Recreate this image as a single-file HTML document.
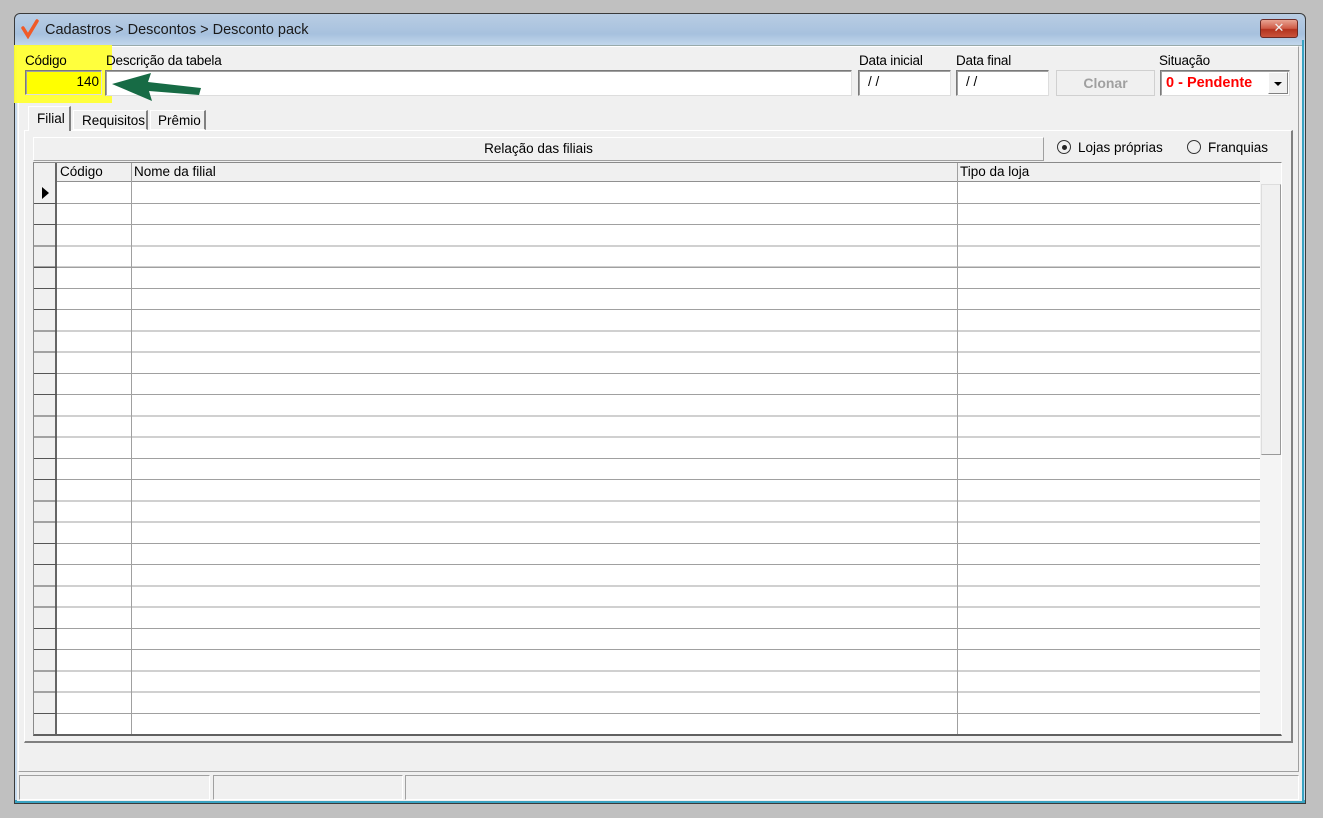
<!DOCTYPE html>
<html><head><meta charset="utf-8"><style>
*{margin:0;padding:0;box-sizing:border-box}
body{width:1323px;height:818px;background:#c0c0c0;position:relative;overflow:hidden;font-family:"Liberation Sans",sans-serif;font-size:13.5px;color:#000}
.a{position:absolute}
.inp{position:absolute;background:#fff;border:1px solid #7a7a7a;border-right-color:#ddd;border-bottom-color:#ddd;box-shadow:inset 1px 1px 0 #a0a0a0}
.lbl{position:absolute;font-size:13.5px;letter-spacing:-0.2px}
</style></head><body>
<div class="a" style="left:14px;top:13px;width:1292px;height:791px;border:1px solid #3a3a3a;border-radius:6px 6px 0 0;background:linear-gradient(#b9cde3,#a7c1de 20px,#c7dbee 33px);"></div>
<div class="a" style="left:15px;top:800px;width:1290px;height:3px;background:#3aa3c2"></div>
<div class="a" style="left:1302px;top:40px;width:2px;height:762px;background:#3aa3c2"></div>
<svg class="a" style="left:20px;top:19px" width="20" height="20" viewBox="0 0 20 20"><path d="M3 9 L8 17 L17 2" stroke="#f05a28" stroke-width="3.5" fill="none" stroke-linecap="round"/></svg>
<div class="a" style="left:45px;top:22px;font-size:14.5px;color:#1a1a1a">Cadastros &gt; Descontos &gt; Desconto pack</div>
<div class="a" style="left:1260px;top:19px;width:38px;height:19px;border:1px solid #6b2a26;border-radius:3px;background:linear-gradient(#e8a493,#cf5a45 50%,#b3321e 55%,#c9533c);color:#eee;font-size:13px;text-align:center;line-height:16px">✕</div>
<div class="a" style="left:17px;top:45px;width:1285px;height:756px;background:#f0f0f0;border-top:1px solid #9aa"></div>
<div class="a" style="left:18px;top:46px;width:1281px;height:726px;border:1px solid #fff;border-right-color:#a0a0a0;border-bottom-color:#a0a0a0"></div>
<div class="a" style="left:14px;top:45px;width:98px;height:58px;background:#ffff33;opacity:.95"></div>
<div class="lbl" style="left:25px;top:53px">Código</div>
<div class="inp" style="left:25px;top:70px;width:77px;height:25px;background:#ffff00;text-align:right;padding-right:2px;line-height:22px">140</div>
<div class="lbl" style="left:106px;top:53px">Descrição da tabela</div>
<div class="inp" style="left:105px;top:70px;width:747px;height:26px"></div>
<svg class="a" style="left:105px;top:68px" width="100" height="36"><polygon points="7,16 46,5 43,14 96,20 94,27 44,23 47,33" fill="#176b45"/></svg>
<div class="lbl" style="left:859px;top:53px">Data inicial</div>
<div class="inp" style="left:858px;top:70px;width:93px;height:26px;padding-left:9px;line-height:22px">/ /</div>
<div class="lbl" style="left:956px;top:53px">Data final</div>
<div class="inp" style="left:956px;top:70px;width:93px;height:26px;padding-left:9px;line-height:22px">/ /</div>
<div class="a" style="left:1056px;top:70px;width:99px;height:26px;border:1px solid #d0d0d0;background:#f0f0f0;color:#a0a0a0;font-weight:bold;font-size:14px;text-align:center;line-height:24px">Clonar</div>
<div class="lbl" style="left:1159px;top:53px">Situação</div>
<div class="inp" style="left:1160px;top:70px;width:130px;height:26px;color:#ff0000;font-weight:bold;font-size:14.5px;padding-left:5px;line-height:24px">0 - Pendente</div>
<div class="a" style="left:1268px;top:72px;width:20px;height:22px;background:#f0f0f0;border:1px solid #fff;border-right-color:#808080;border-bottom-color:#808080"><svg width="18" height="20"><polygon points="5,9 13,9 9,13" fill="#000"/></svg></div>
<div class="a" style="left:24px;top:130px;width:1269px;height:613px;border:1px solid #fff;border-right:2px solid #808080;border-bottom:2px solid #808080;background:#f0f0f0"></div>
<div class="a" style="left:28px;top:106px;width:43px;height:25px;border:1px solid #fff;border-right:2px solid #808080;border-bottom:none;background:#f0f0f0;padding:4px 0 0 8px">Filial</div>
<div class="a" style="left:73px;top:110px;width:75px;height:20px;border:1px solid #fff;border-right:2px solid #808080;padding:2px 0 0 8px">Requisitos</div>
<div class="a" style="left:150px;top:110px;width:56px;height:20px;border:1px solid #fff;border-right:2px solid #808080;padding:2px 0 0 7px">Prêmio</div>
<div class="a" style="left:33px;top:137px;width:1011px;height:24px;border:1px solid #fff;border-right-color:#a0a0a0;border-bottom-color:#a0a0a0;text-align:center;line-height:22px">Relação das filiais</div>
<div class="a" style="left:1057px;top:140px;width:14px;height:14px;border:1.5px solid #333;border-radius:50%"></div>
<div class="a" style="left:1062px;top:145px;width:5px;height:5px;background:#222;border-radius:50%"></div>
<div class="a" style="left:1078px;top:140px">Lojas próprias</div>
<div class="a" style="left:1187px;top:140px;width:14px;height:14px;border:1.5px solid #333;border-radius:50%"></div>
<div class="a" style="left:1208px;top:140px">Franquias</div>
<div class="a" style="left:33px;top:162px;width:1249px;height:574px;border:1px solid #8a8a8a;border-right:1px solid #fff;border-bottom:2px solid #606060;background:#fff;overflow:hidden">
<div class="a" style="left:0;top:0;width:1249px;height:19px;background:#f0f0f0;border-bottom:1px solid #909090"></div>
<div class="a" style="left:0;top:0;width:23px;height:574px;background:#f0f0f0;border-right:2px solid #666"></div>
<div class="a" style="left:97px;top:0;width:1px;height:574px;background:#a0a0a0"></div>
<div class="a" style="left:923px;top:0;width:1px;height:574px;background:#a0a0a0"></div>
<div class="a" style="left:26px;top:1px">Código</div>
<div class="a" style="left:100px;top:1px">Nome da filial</div>
<div class="a" style="left:926px;top:1px">Tipo da loja</div>
<div class="a" style="left:0;top:40px;width:1226px;height:532px;background:repeating-linear-gradient(to bottom,#a0a0a0 0,#a0a0a0 1px,transparent 1px,transparent 21.25px)"></div>
<div class="a" style="left:0;top:40px;width:23px;height:532px;background:repeating-linear-gradient(to bottom,#555 0,#555 1px,transparent 1px,transparent 21.25px)"></div>
<svg class="a" style="left:7px;top:23px" width="10" height="14"><polygon points="1,1 8,7 1,13" fill="#000"/></svg>
<div class="a" style="left:1226px;top:0;width:23px;height:574px;background:#f4f4f4"></div>
<div class="a" style="left:1227px;top:21px;width:20px;height:271px;background:#f0f0f0;border:1px solid #ddd;border-right-color:#999;border-bottom-color:#999"></div>
</div>
<div class="a" style="left:19px;top:775px;width:191px;height:25px;border:1px solid #a0a0a0;border-right-color:#fff;border-bottom-color:#fff"></div>
<div class="a" style="left:213px;top:775px;width:190px;height:25px;border:1px solid #a0a0a0;border-right-color:#fff;border-bottom-color:#fff"></div>
<div class="a" style="left:405px;top:775px;width:894px;height:25px;border:1px solid #a0a0a0;border-right-color:#fff;border-bottom-color:#fff"></div>
</body></html>
